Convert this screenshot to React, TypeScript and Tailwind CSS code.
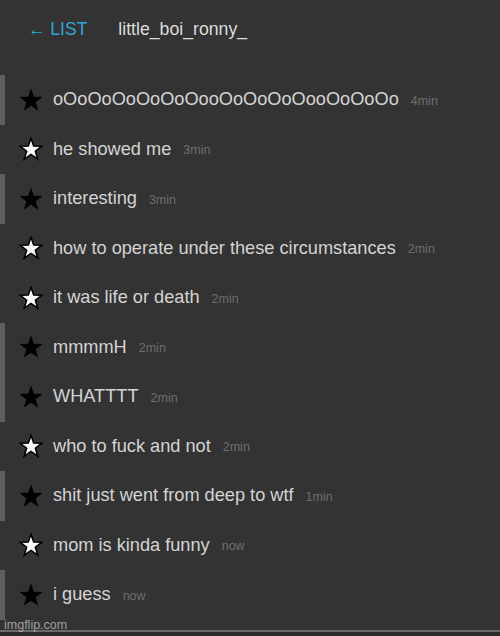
import React from "react";

const rows: { text: string; time: string; black: boolean }[] = [
  { text: "oOoOoOoOoOoOooOoOoOoOooOoOoOo", time: "4min", black: true },
  { text: "he showed me", time: "3min", black: false },
  { text: "interesting", time: "3min", black: true },
  { text: "how to operate under these circumstances", time: "2min", black: false },
  { text: "it was life or death", time: "2min", black: false },
  { text: "mmmmH", time: "2min", black: true },
  { text: "WHATTTT", time: "2min", black: true },
  { text: "who to fuck and not", time: "2min", black: false },
  { text: "shit just went from deep to wtf", time: "1min", black: true },
  { text: "mom is kinda funny", time: "now", black: false },
  { text: "i guess", time: "now", black: true },
];

function Star({ black }: { black: boolean }) {
  const pts: string[] = [];
  for (let i = 0; i < 10; i++) {
    const r = i % 2 === 0 ? 11.5 : 4.6;
    const a = (Math.PI / 5) * i - Math.PI / 2;
    pts.push(`${(12 + r * Math.cos(a)).toFixed(2)},${(12.8 + r * Math.sin(a)).toFixed(2)}`);
  }
  return (
    <svg width="24" height="24" viewBox="0 0 24 24">
      <polygon
        points={pts.join(" ")}
        fill={black ? "#000" : "#fff"}
        stroke="#000"
        strokeWidth={black ? 0.5 : 1.6}
        strokeLinejoin="miter"
      />
    </svg>
  );
}

export default function App() {
  return (
    <div
      className="w-[500px] h-[636px] bg-[#333333] relative overflow-hidden"
      style={{ fontFamily: '"Liberation Sans", Arial, sans-serif' }}
    >
      <div className="h-[75px] flex items-start pt-[16px]">
        <span className="ml-[28px] text-[17.5px] text-[#2ea6d6]">←&nbsp;LIST</span>
        <span className="ml-[31px] text-[17.7px] text-[#dcdcdc]">little_boi_ronny_</span>
      </div>
      <div className="flex flex-col">
        {rows.map((r, i) => (
          <div key={i} className="h-[49.5px] flex items-center">
            <div className={`w-[5px] self-stretch ${r.black ? "bg-[#5e5e5e]" : ""}`} />
            <div className="ml-[14px] w-[24px] flex items-center">
              <Star black={r.black} />
            </div>
            <span className="ml-[10px] text-[18.2px] text-[#d4d4d4] whitespace-nowrap">{r.text}</span>
            <span className="ml-[12px] text-[12.5px] text-[#6e6e6e] mt-[3px]">{r.time}</span>
          </div>
        ))}
      </div>
      <div className="absolute left-0 right-0 top-[630px] h-[2px] bg-[#6a6a6a]" />
      <div className="absolute left-0 right-0 top-[632px] bottom-0 bg-[#2b2b2b]" />
      <div className="absolute left-[4px] top-[619px] text-[12.5px] leading-none text-[#bdbdbd]/80">imgflip.com</div>
    </div>
  );
}
